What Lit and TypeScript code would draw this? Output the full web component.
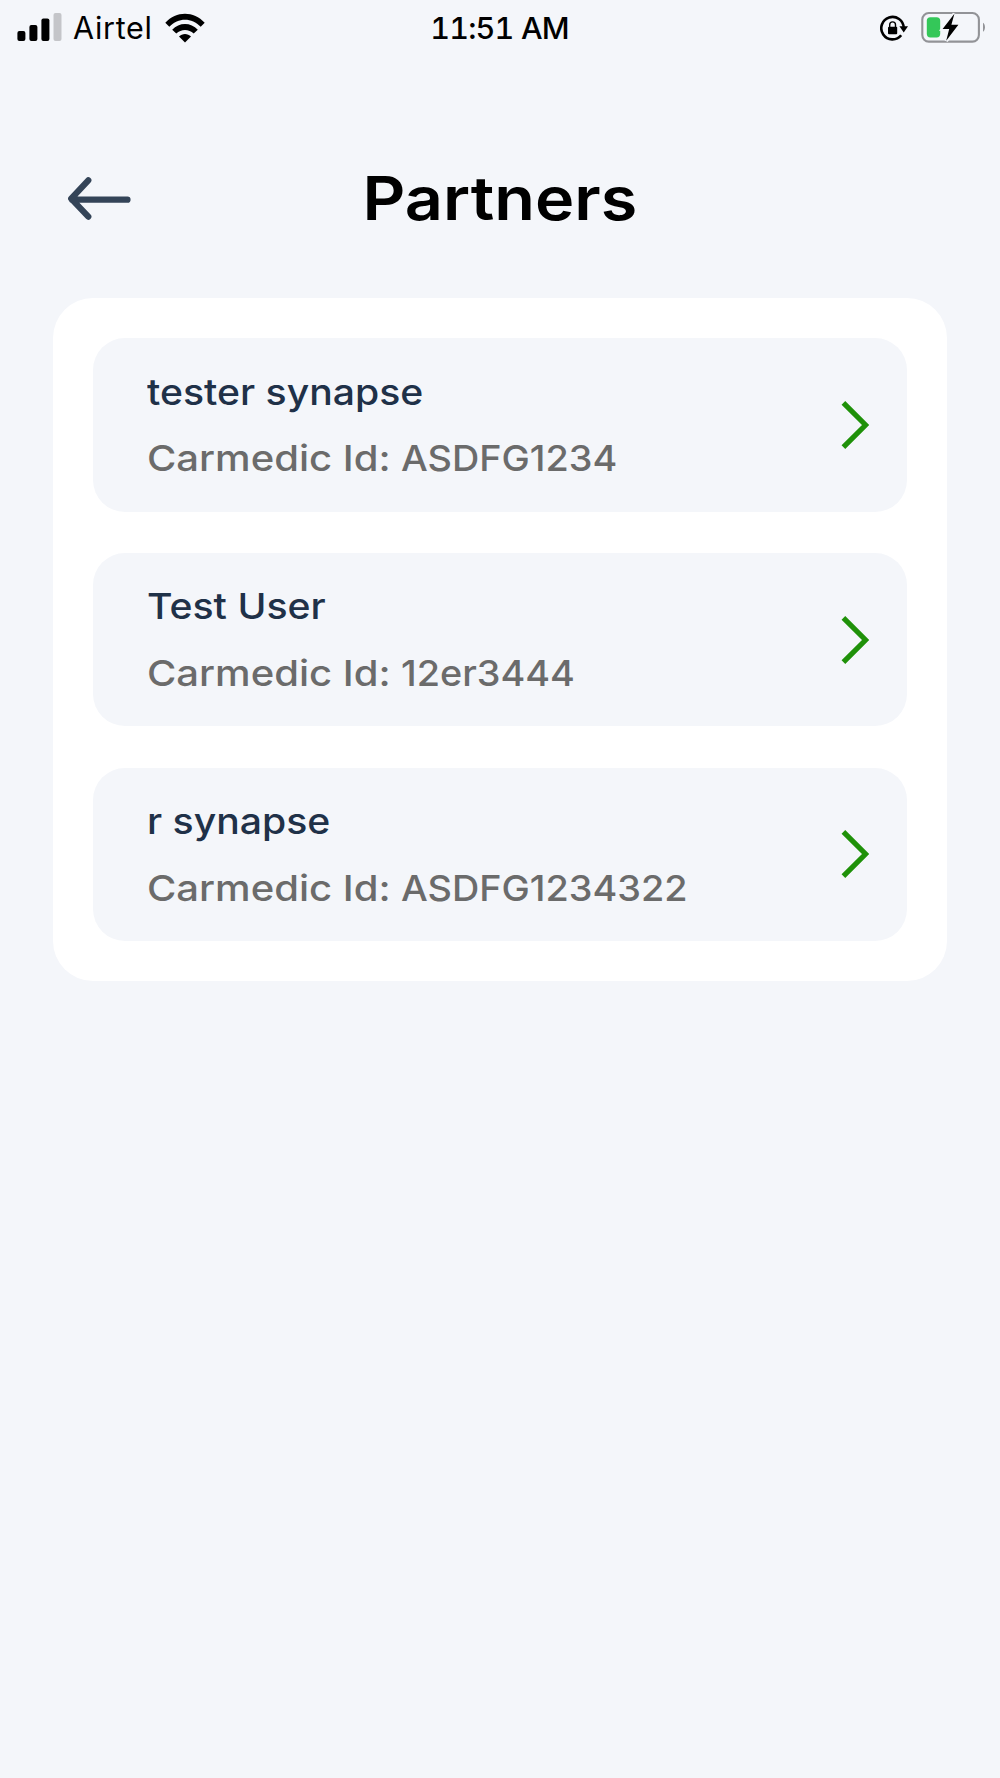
import { LitElement, html, css } from "lit";
import { customElement, property } from "lit/decorators.js";

interface Partner {
  name: string;
  id: string;
}

@customElement("status-bar")
class StatusBar extends LitElement {
  static styles = css`
    :host {
      display: grid;
      grid-template-columns: 1fr auto 1fr;
      align-items: center;
      height: 54px;
      padding: 0 15px 0 17px;
      color: #000;
      font-family: Inter, "Liberation Sans", sans-serif;
      white-space: nowrap;
    }
    svg { display: block; flex: none; }
    .side { display: flex; align-items: center; }
    .right { justify-content: flex-end; gap: 12px; }
    .carrier { font-size: 30.5px; line-height: 54px; margin-left: 11px; padding-top: 1px; letter-spacing: 0.7px; width: 92px; }
    .time { font-size: 30.5px; line-height: 54px; padding: 1px 3px 0 0; font-weight: 500; font-variant-numeric: tabular-nums; letter-spacing: -0.8px; }
  `;

  render() {
    return html`
      <div class="side">
        <svg width="45" height="54" viewBox="17 0 45 54">
          <rect x="17.4" y="30" width="8" height="10" rx="2" />
          <rect x="29.4" y="24" width="8" height="16" rx="2" />
          <rect x="41.4" y="17.5" width="8" height="22.5" rx="2" />
          <rect x="53.5" y="12" width="8" height="28" rx="2" fill="#c4c5c9" />
        </svg>
        <span class="carrier">Airtel</span>
        <svg width="41" height="54" viewBox="165 0 41 54">
          <path d="M165.3 21.8 C176.3 9.7 193.7 9.7 204.7 21.8 L200.7 25.8 C191.8 16.4 178.2 16.4 169.3 25.8 Z" />
          <path d="M172.2 28.7 C179.2 21.2 190.8 21.2 197.8 28.7 L193.7 32.6 C188.9 27.8 181.1 27.8 176.3 32.6 Z" />
          <path d="M179 35.5 C182.2 32.1 187.8 32.1 191 35.5 L185 41.5 Z" />
        </svg>
      </div>
      <span class="time">11:51 AM</span>
      <div class="side right">
        <svg width="29" height="54" viewBox="880 0 29 54">
          <path d="M901.2 34.2 A11.2 11.2 0 1 1 903.7 27" fill="none" stroke="#000" stroke-width="2.6" />
          <path d="M899.4 25.2 H908 L903.7 31.4 Z" />
          <rect x="888" y="25.8" width="9.2" height="7.4" rx="1" />
          <path d="M889.7 26.5 V23.8 A2.9 2.9 0 0 1 895.5 23.8 V26.5" fill="none" stroke="#000" stroke-width="1.4" />
        </svg>
        <svg width="64" height="54" viewBox="921 0 64 54">
          <rect x="922.3" y="12" width="56.6" height="28.6" rx="6.5" fill="none" stroke="#929397" stroke-width="2.1" />
          <path d="M983 21.8 C985.6 23.3 985.6 29.3 983 30.8 Z" fill="#929397" />
          <rect x="926.8" y="16.2" width="13.4" height="20.2" rx="3.6" fill="#34c759" />
          <path d="M954.4 12.8 L942.6 28 H949.2 L946.2 39.8 L958.4 23.8 H951.4 Z" stroke="#f4f6fa" stroke-width="3.6" />
          <path d="M954.4 12.8 L942.6 28 H949.2 L946.2 39.8 L958.4 23.8 H951.4 Z" />
        </svg>
      </div>
    `;
  }
}

@customElement("partner-row")
class PartnerRow extends LitElement {
  @property({ attribute: false }) partner!: Partner;

  static styles = css`
    :host {
      display: flex;
      align-items: center;
      justify-content: space-between;
      height: 173.3px;
      box-sizing: border-box;
      padding: 0 38.2px 0 53.5px;
      border-radius: 32px;
      background: #f4f6fa;
    }
    .text { display: flex; flex-direction: column; gap: 6.5px; white-space: nowrap; font-size: 36px; line-height: 60px; font-weight: 540; }
    .name, .label, .value { transform-origin: left center; }
    .name { color: #1f3148; transform: scaleX(1.088); }
    .id { display: flex; color: #6b6b6b; }
    .label { width: 254px; transform: scaleX(1.112); }
    .value { transform: scaleX(1.05); }
    svg { display: block; }
  `;

  render() {
    return html`
      <div class="text">
        <span class="name">${this.partner.name}</span>
        <div class="id">
          <span class="label">Carmedic Id:</span>
          <span class="value">${this.partner.id}</span>
        </div>
      </div>
      <svg width="28" height="50" viewBox="0 0 28 50">
        <path d="M2.4 2.8 L24.6 25 L2.4 47.2" fill="none" stroke="#1f9109" stroke-width="5.2" />
      </svg>
    `;
  }
}

@customElement("app-root")
class AppRoot extends LitElement {
  private partners: Partner[] = [
    { name: "tester synapse", id: "ASDFG1234" },
    { name: "Test User", id: "12er3444" },
    { name: "r synapse", id: "ASDFG1234322" },
  ];

  static styles = css`
    :host {
      display: block;
      min-height: 1778px;
      background: #f4f6fa;
      font-family: Inter, "Liberation Sans", sans-serif;
    }
    .header {
      display: grid;
      grid-template-columns: 1fr auto 1fr;
      align-items: center;
      height: 90px;
      margin-top: 100px;
      padding: 0 66px;
    }
    .header svg { display: block; }
    .title {
      margin: 0;
      padding-bottom: 2px;
      font-size: 60.5px;
      line-height: 88px;
      font-weight: 600;
      color: #000;
      transform: scaleX(1.1);
    }
    .card {
      display: flex;
      flex-direction: column;
      gap: 41.4px;
      margin: 54.4px 53.3px 0;
      padding: 40px;
      border-radius: 40px;
      background: #fff;
    }
  `;

  render() {
    return html`
      <status-bar></status-bar>
      <header class="header">
        <svg width="66" height="48" viewBox="66 175 66 48">
          <path d="M88.3 180.3 L71.2 198.7 L88.3 216.7 M72 199.7 H127.5" fill="none" stroke="#344458" stroke-width="6.2" stroke-linecap="round" stroke-linejoin="round" />
        </svg>
        <h1 class="title">Partners</h1>
      </header>
      <main class="card">
        ${this.partners.map((p) => html`<partner-row .partner=${p}></partner-row>`)}
      </main>
    `;
  }
}
